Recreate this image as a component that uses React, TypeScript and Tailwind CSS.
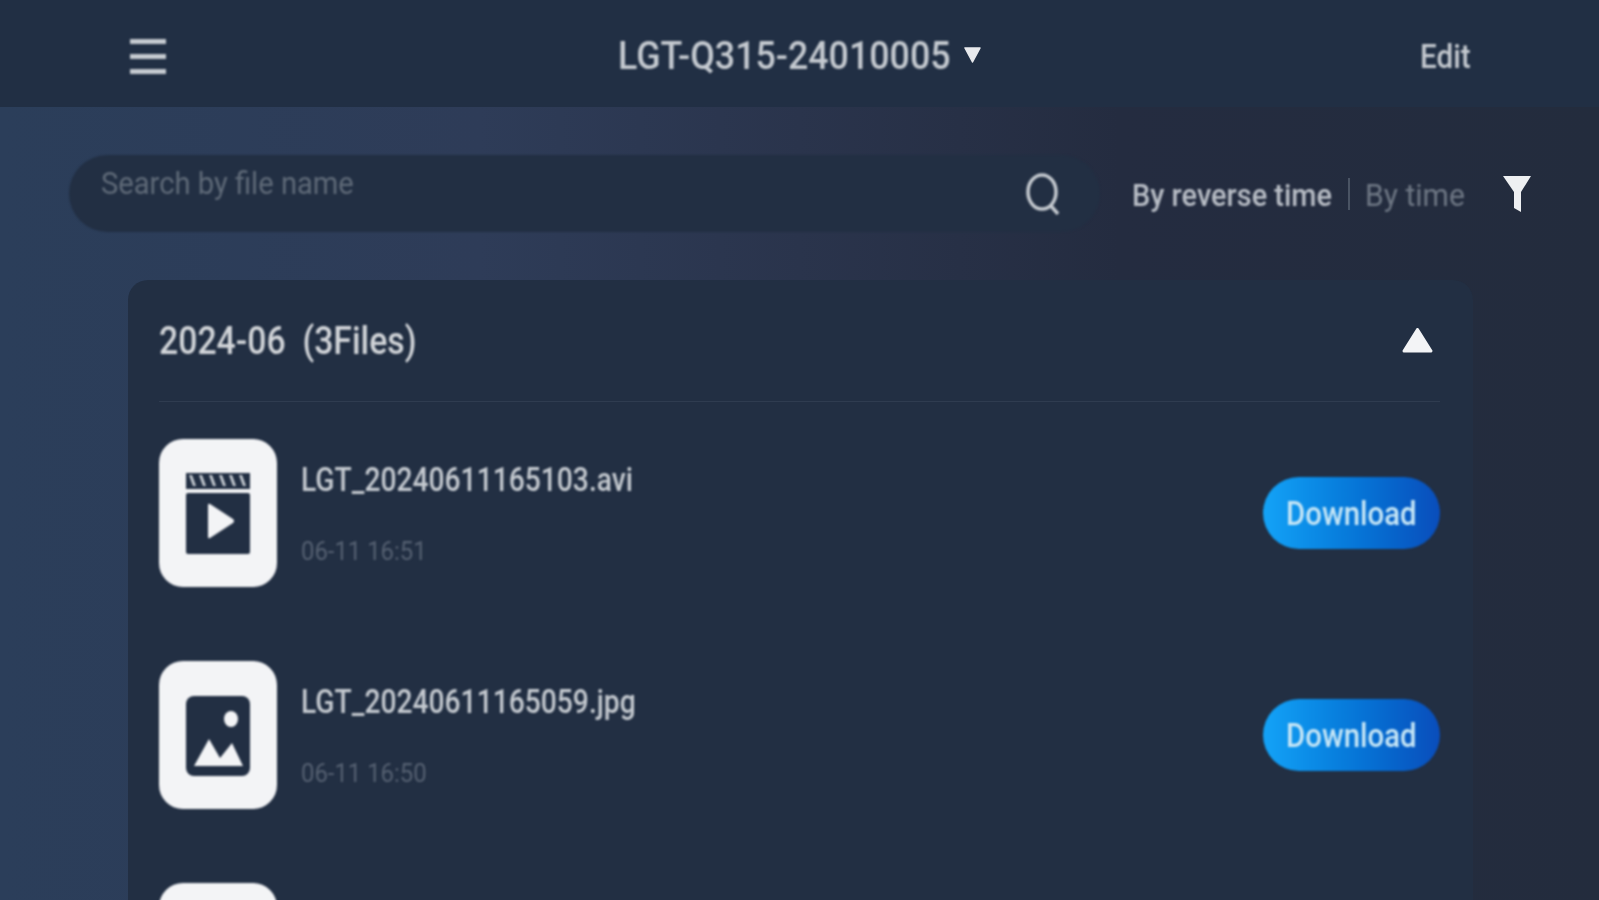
import React from "react";

const font = "font-['Roboto',sans-serif]";

function Row({ name, date, kind }: { name?: string; date?: string; kind: "video" | "image" | "other" }) {
  return (
    <div className="flex h-[148px] items-center shrink-0">
      <div className="h-[148px] w-[118px] shrink-0 rounded-[24px] bg-[#f3f4f6] blur-[0.8px]">
        {kind === "video" && (
          <svg width="118" height="148" viewBox="0 0 118 148">
            <rect x="27" y="34" width="64" height="16" fill="#222f43" />
            <path d="M30 36l4 11h3l-4-11zM40 36l4 11h3l-4-11zM50 36l4 11h3l-4-11zM60 36l4 11h3l-4-11zM70 36l4 11h3l-4-11zM80 36l4 11h3l-4-11z" fill="#c9ced4" />
            <rect x="27" y="54" width="64" height="61" rx="2" fill="#222f43" />
            <path d="M49 66 Q49 64 51 65 L74 80 Q76 82 74 84 L51 99 Q49 100 49 98 Z" fill="#f3f4f6" />
          </svg>
        )}
        {kind === "image" && (
          <svg width="118" height="148" viewBox="0 0 118 148">
            <rect x="27" y="35" width="64" height="80" rx="8" fill="#222f43" />
            <ellipse cx="72" cy="58" rx="7" ry="8" fill="#f3f4f6" />
            <path d="M35 105 L50 78 L61 97 L73 82 L84 105 Z" fill="#f3f4f6" />
          </svg>
        )}
      </div>
      {name && (
        <div className="ml-6 flex flex-col blur-[0.9px]">
          <span className="block h-[40px] w-[340px] origin-left scale-x-[0.855] whitespace-nowrap text-[33px] font-medium leading-[40px] text-[#c5cad0]">{name}</span>
          <span className="mt-[37px] block h-[30px] w-[140px] origin-left scale-x-[0.955] whitespace-nowrap text-[25px] leading-[30px] text-[#566172]">{date}</span>
        </div>
      )}
      {name && (
        <div className="ml-auto flex h-[72px] w-[177px] items-center justify-center rounded-full bg-gradient-to-r from-[#14a3f7] to-[#0a4dbb] blur-[0.8px]">
          <span className="block scale-x-[0.89] text-[33px] font-medium leading-none text-[#c6e6f6]">Download</span>
        </div>
      )}
    </div>
  );
}

export default function App() {
  return (
    <div className={`${font} flex h-screen w-full flex-col overflow-hidden bg-[linear-gradient(to_right,#2b3e5a_0%,#2e3c58_30%,#2a344c_50%,#242c40_70%,#232c3d_100%)]`}>
      <header className="flex h-[107px] shrink-0 items-center bg-[#212f44] pt-[5px]">
        <div className="ml-[130px] flex h-[35px] w-[36px] flex-col justify-between blur-[0.9px]">
          <span className="block h-[5px] bg-[#c5cad0]" />
          <span className="block h-[5px] bg-[#c5cad0]" />
          <span className="block h-[5px] bg-[#c5cad0]" />
        </div>
        <span className="ml-[452px] block w-[345px] origin-left scale-x-[0.917] whitespace-nowrap text-[39px] font-medium leading-none text-[#c5cad0] blur-[0.9px]">LGT-Q315-24010005</span>
        <svg className="mb-[2px] blur-[0.6px]" width="19" height="16" viewBox="0 0 19 16"><path d="M2 1H17L9.5 15Z" fill="#e8eaed" stroke="#e8eaed" strokeWidth="1.5" strokeLinejoin="round" /></svg>
        <span className="ml-auto mr-[127px] block w-[52px] origin-left scale-x-[0.9] text-[33px] font-medium leading-none text-[#c5cad0] blur-[0.9px]">Edit</span>
      </header>

      <div className="mt-[48px] flex h-[77px] shrink-0 items-center">
        <div className="ml-[69px] flex h-[77px] w-[1031px] items-center rounded-full bg-[#222f43] blur-[0.9px]">
          <span className="mb-[20px] ml-[32px] block w-[280px] origin-left scale-x-[0.94] whitespace-nowrap text-[31px] leading-none text-[#5f6a78]">Search by file name</span>
          <svg className="ml-auto mr-[40px]" width="34" height="42" viewBox="0 0 34 42" fill="none" stroke="#c5cad0" strokeWidth="3.5">
            <ellipse cx="16" cy="19" rx="14" ry="17" />
            <path d="M25 33 L32 41" />
          </svg>
        </div>
        <span className="ml-[32px] mt-[4px] block w-[210px] origin-left scale-x-[0.933] whitespace-nowrap text-[31px] font-medium leading-none text-[#b9bec6] blur-[0.9px]">By reverse time</span>
        <span className="ml-[6px] block h-[32px] w-[2px] bg-[#4a5464] blur-[0.5px]" />
        <span className="ml-[15px] mt-[4px] block w-[117px] origin-left scale-x-[0.97] whitespace-nowrap text-[31px] leading-none text-[#6f7885] blur-[0.9px]">By time</span>
        <svg className="ml-[21px] blur-[0.6px]" width="28" height="36" viewBox="0 0 28 36"><path d="M0 0H28L18 16V36L11 32V16Z" fill="#eef0f2" /></svg>
      </div>

      <main className="ml-[128px] mr-[126px] mt-[48px] flex-1 rounded-t-[20px] bg-[#222f43] pl-[31px] pr-[33px]">
        <div className="flex h-[122px] items-center border-b border-[#2f3c50]">
          <span className="block w-[280px] origin-left scale-x-[0.889] whitespace-pre text-[38px] font-medium leading-none text-[#d2d5d9] blur-[0.9px]">2024-06  (3Files)</span>
          <svg className="ml-auto mb-[2px] mr-[7px] blur-[0.6px]" width="31" height="26" viewBox="0 0 31 26"><path d="M15.5 2.5L29 24H2Z" fill="#f3f4f6" stroke="#f3f4f6" strokeWidth="3" strokeLinejoin="round" /></svg>
        </div>
        <div className="mt-[37px] flex flex-col gap-[74px]">
          <Row name="LGT_20240611165103.avi" date="06-11 16:51" kind="video" />
          <Row name="LGT_20240611165059.jpg" date="06-11 16:50" kind="image" />
          <Row kind="other" />
        </div>
      </main>
    </div>
  );
}
